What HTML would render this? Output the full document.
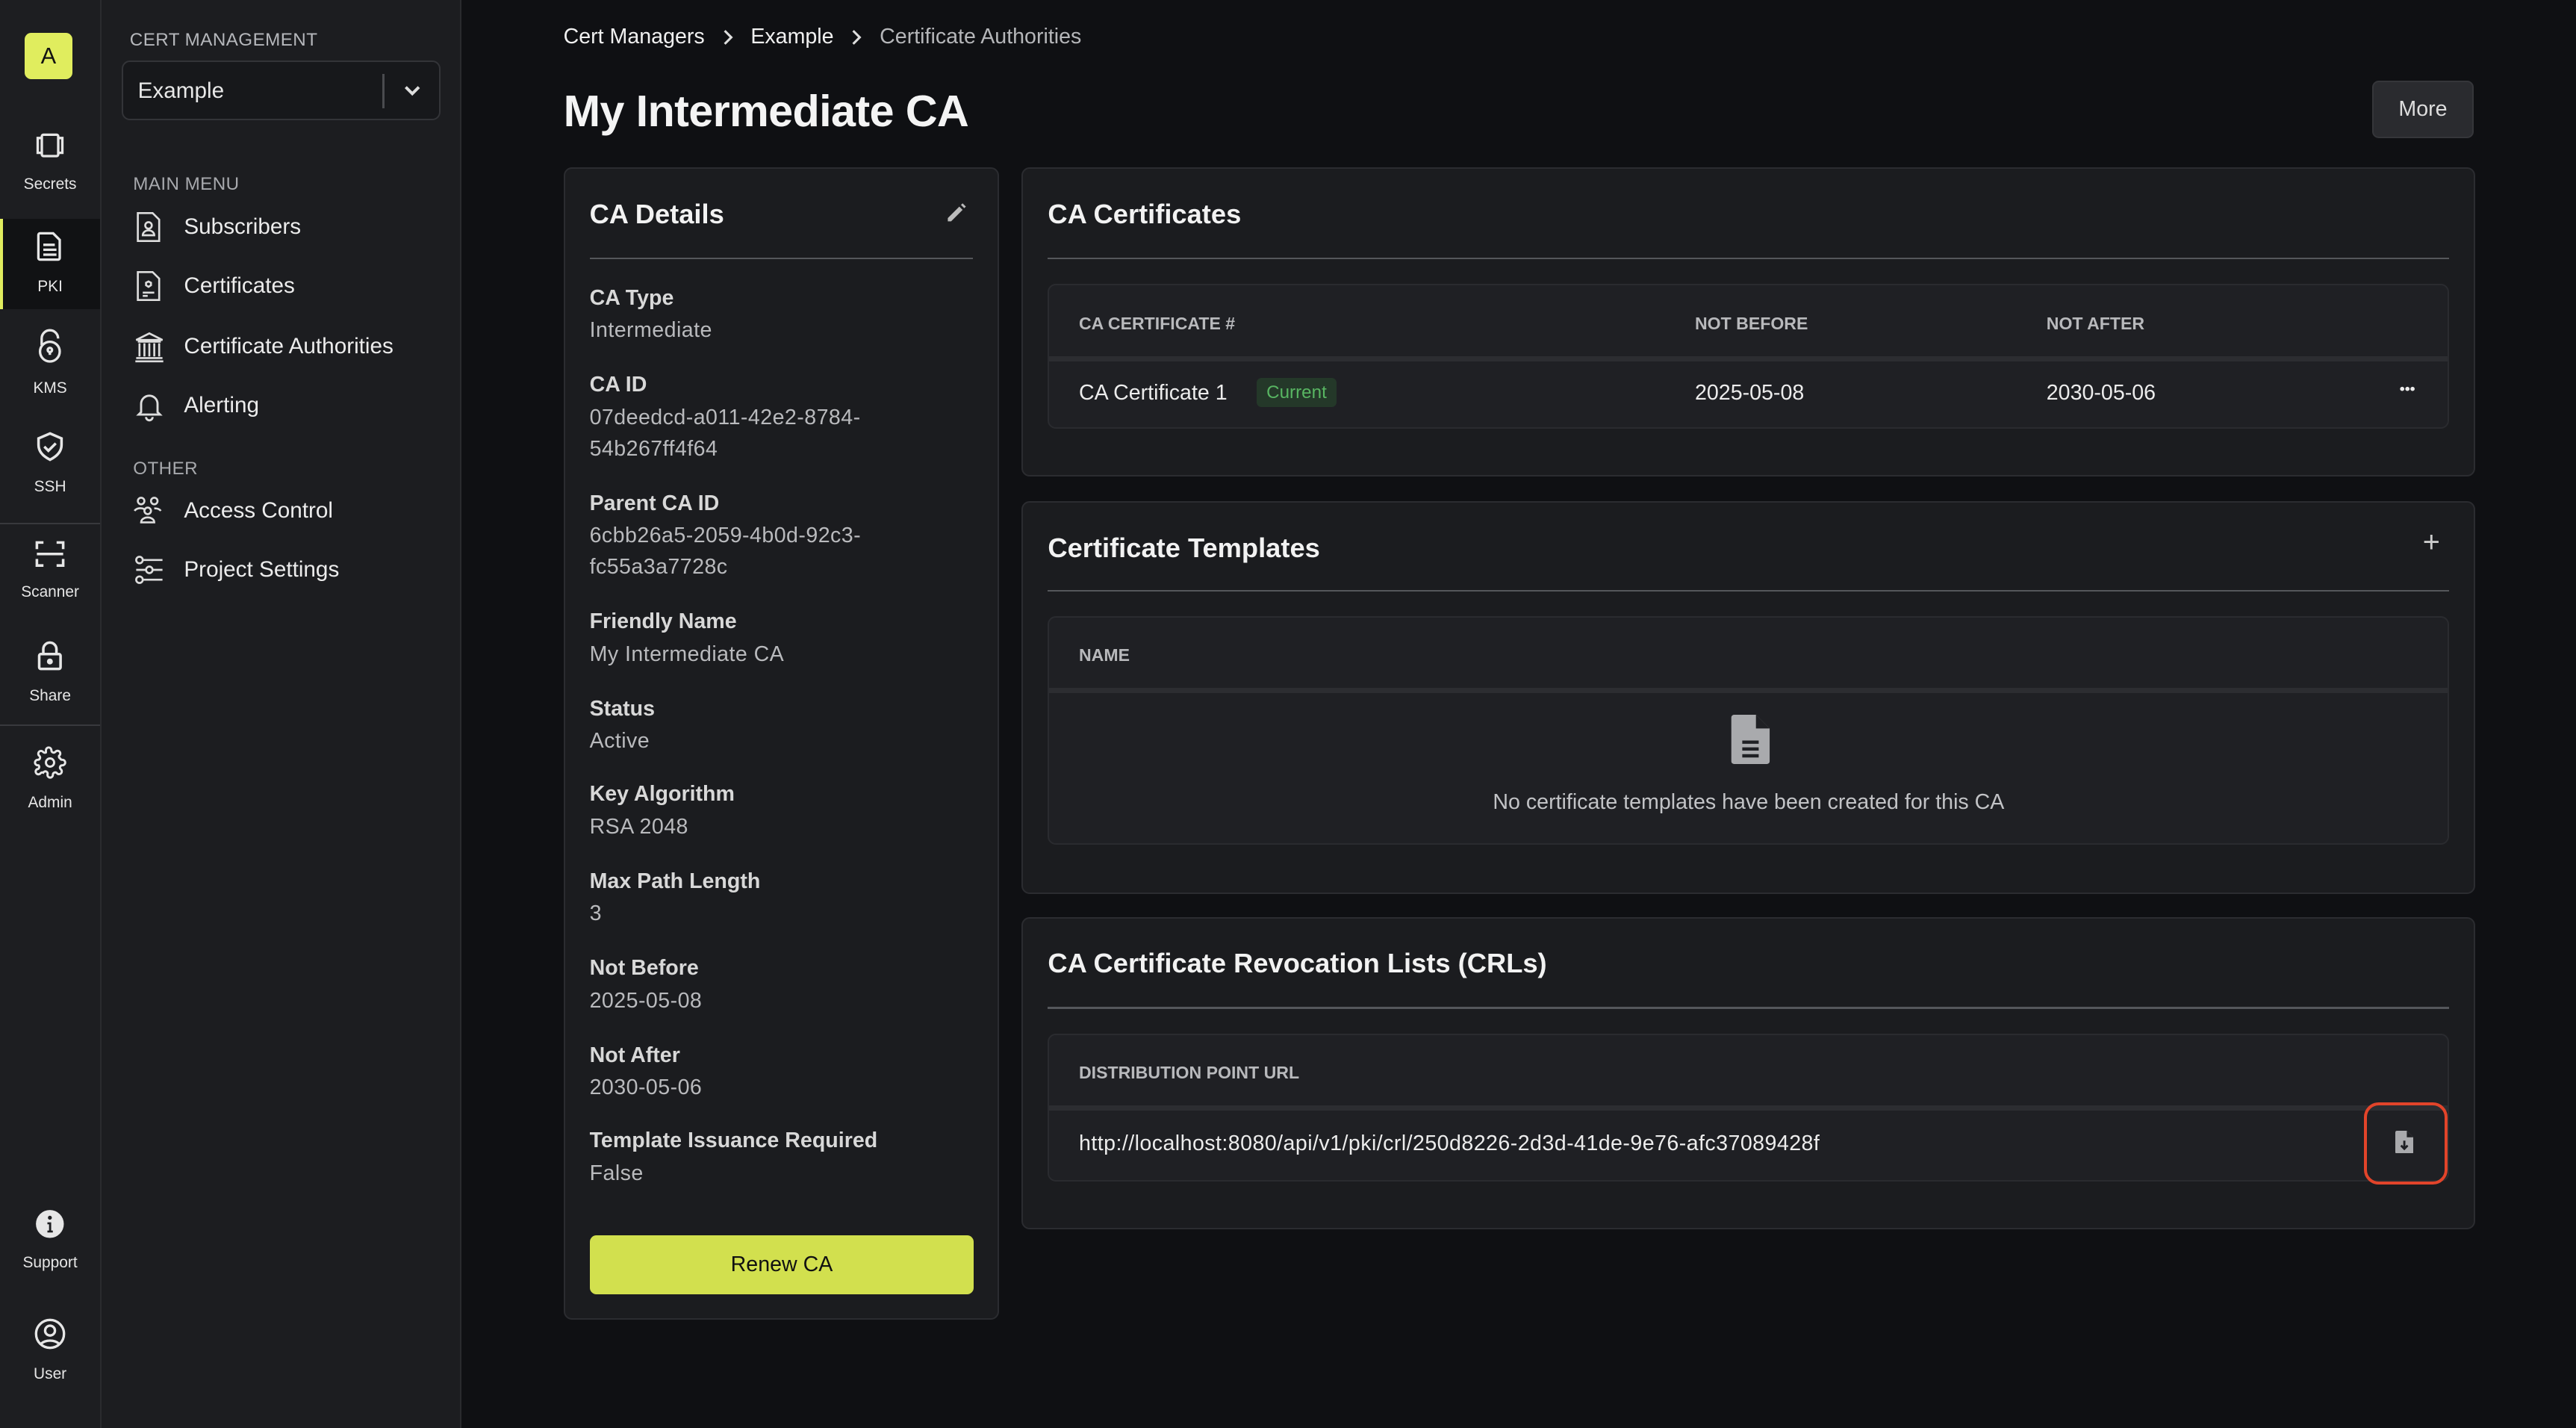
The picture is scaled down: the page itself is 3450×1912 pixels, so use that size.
<!DOCTYPE html>
<html><head><meta charset="utf-8">
<style>
*{box-sizing:border-box;margin:0;padding:0}
html,body{width:3450px;height:1912px;overflow:hidden;background:#0f1013}
#w{zoom:2.2;width:1569px;height:870px;position:relative;font-family:"Liberation Sans",sans-serif;color:#e8e8e8;background:#0f1013}
.a{position:absolute}
.rail{left:0;top:0;width:62px;height:869px;background:#1d1e21;border-right:1px solid #2a2b2e}
.ri{position:absolute;left:0;width:61px;text-align:center;font-size:9.5px;color:#e6e6e6}
.ri svg{display:block;margin:0 auto 9px}
.side{left:62px;top:0;width:219px;height:869px;background:#1c1d20;border-right:1px solid #2a2b2e}
.sec{position:absolute;left:19px;font-size:11px;color:#a7a9ad;letter-spacing:.2px}
.mi{position:absolute;left:19px;font-size:13.5px;color:#ececec;display:flex;align-items:center}
.mi svg{width:20px;height:20px;margin-right:11px}
.card{position:absolute;background:#1b1c1f;border:1px solid #2b2c30;border-radius:5px}
.ct{position:absolute;left:15px;font-size:16.5px;font-weight:bold;color:#f2f2f2}
.ln{position:absolute;left:15px;right:15px;height:1px;background:#55575b}
.tb{position:absolute;left:15px;right:15px;background:#1f2024;border:1px solid #2a2b2f;border-radius:5px;overflow:hidden}
.th{position:absolute;font-size:10.5px;font-weight:bold;color:#b8b9bc}
.td{position:absolute;font-size:13px;color:#ececec}
.hl{position:absolute;left:0;right:0;height:3px;background:#2c2d31}
.fl{position:absolute;left:15px;font-size:13px}
.fl b{display:block;color:#d8d8d8;font-weight:bold;margin-bottom:3px}
.fl span{color:#b9babd;line-height:19px;letter-spacing:.2px}
</style></head><body><div id="w">
<div class="a rail">
 <div class="a" style="left:15px;top:20px;width:29px;height:28px;background:#e0ed5e;border-radius:4px;color:#111;font-size:14px;text-align:center;line-height:28px">A</div>
 <div class="ri" style="top:80px"><svg width="20" height="18" viewBox="0 0 20 18" fill="none" stroke="#e6e6e6" stroke-width="1.5"><rect x="5" y="2" width="10" height="13" rx="1"/><path d="M5 4H2.5v9H5M15 4h2.5v9H15"/></svg>Secrets</div>
 <div class="a" style="left:0;top:133px;width:61px;height:55px;background:#111214;border-left:2px solid #e0ed5e"></div>
 <div class="ri" style="top:140px"><svg width="18" height="20" viewBox="0 0 18 20" fill="none" stroke="#e6e6e6" stroke-width="1.5"><path d="M3 2h8l4 4v11a1 1 0 0 1-1 1H3a1 1 0 0 1-1-1V3a1 1 0 0 1 1-1z"/><path d="M5 9h7M5 12h8M5 15h8"/></svg>PKI</div>
 <div class="ri" style="top:200px"><svg width="18" height="22" viewBox="0 0 18 22" fill="none" stroke="#e6e6e6" stroke-width="1.5"><path d="M4 10V6a5 5 0 0 1 10 0"/><circle cx="9" cy="14" r="6"/><circle cx="9" cy="13" r="1.3"/><path d="M9 14v2"/></svg>KMS</div>
 <div class="ri" style="top:262px"><svg width="20" height="20" viewBox="0 0 20 20" fill="none" stroke="#e6e6e6" stroke-width="1.6"><path d="M10 2l7 3v4c0 4-3 7-7 9-4-2-7-5-7-9V5z"/><path d="M6.5 10l2.5 2.5 4.5-4.5"/></svg>SSH</div>
 <div class="a" style="left:0;top:318px;width:61px;height:1px;background:#38393d"></div>
 <div class="ri" style="top:328px"><svg width="20" height="18" viewBox="0 0 20 18" fill="none" stroke="#e6e6e6" stroke-width="1.6"><path d="M2 6V2h4M14 2h4v4M18 12v4h-4M6 16H2v-4M2 9h16"/></svg>Scanner</div>
 <div class="ri" style="top:389px"><svg width="18" height="20" viewBox="0 0 18 20" fill="none" stroke="#e6e6e6" stroke-width="1.6"><path d="M5 9V6a4 4 0 0 1 8 0v3"/><rect x="2.5" y="9" width="13" height="9" rx="1"/><circle cx="9" cy="13.5" r="1" fill="#e6e6e6"/></svg>Share</div>
 <div class="a" style="left:0;top:441px;width:61px;height:1px;background:#38393d"></div>
 <div class="ri" style="top:454px"><svg width="20" height="20" viewBox="0 0 24 24" fill="none" stroke="#e6e6e6" stroke-width="1.6"><circle cx="12" cy="12" r="3"/><path d="M19.4 15a1.7 1.7 0 0 0 .3 1.8l.1.1a2 2 0 1 1-2.8 2.8l-.1-.1a1.7 1.7 0 0 0-2.8 1.2V21a2 2 0 1 1-4 0v-.1A1.7 1.7 0 0 0 7 19.4a1.7 1.7 0 0 0-1.8.3l-.1.1a2 2 0 1 1-2.8-2.8l.1-.1A1.7 1.7 0 0 0 3.6 14H3a2 2 0 1 1 0-4h.1A1.7 1.7 0 0 0 4.6 9a1.7 1.7 0 0 0-.3-1.8l-.1-.1a2 2 0 1 1 2.8-2.8l.1.1A1.7 1.7 0 0 0 9 4.6V3a2 2 0 1 1 4 0v.1a1.7 1.7 0 0 0 1 1.5 1.7 1.7 0 0 0 1.8-.3l.1-.1a2 2 0 1 1 2.8 2.8l-.1.1A1.7 1.7 0 0 0 19.4 9 1.7 1.7 0 0 0 21 10h.1a2 2 0 1 1 0 4H21a1.7 1.7 0 0 0-1.6 1z"/></svg>Admin</div>
 <div class="ri" style="top:736px"><svg width="18" height="18" viewBox="0 0 18 18"><circle cx="9" cy="9" r="8.5" fill="#e6e6e6"/><circle cx="9" cy="5.2" r="1.2" fill="#1d1e21"/><path d="M7.5 8h2.3v5h1v1.2H7.5V13h1V9.2h-1z" fill="#1d1e21"/></svg>Support</div>
 <div class="ri" style="top:802px"><svg width="20" height="20" viewBox="0 0 20 20" fill="none" stroke="#e6e6e6" stroke-width="1.5"><circle cx="10" cy="10" r="8.5"/><circle cx="10" cy="8" r="3"/><path d="M4.5 16a7 5 0 0 1 11 0"/></svg>User</div>
</div>
<div class="a side">
 <div class="sec" style="top:18px;left:17px;color:#b5b7bb">CERT MANAGEMENT</div>
 <div class="a" style="left:12px;top:37px;width:194px;height:36px;border:1px solid #333438;border-radius:5px;background:#17181b">
  <div class="a" style="left:9px;top:10px;font-size:13.5px;color:#e8e8e8">Example</div>
  <div class="a" style="left:158px;top:7px;width:1px;height:21px;background:#4a4b4f"></div>
  <svg class="a" style="left:170px;top:12px" width="12" height="10" viewBox="0 0 12 10" fill="none" stroke="#ddd" stroke-width="1.8"><path d="M2 3l4 4 4-4"/></svg>
 </div>
 <div class="sec" style="top:106px">MAIN MENU</div>
 <div class="mi" style="top:128px"><svg viewBox="0 0 20 20" fill="none" stroke="#ddd" stroke-width="1.2"><path d="M3 1.5h9l4 4v13H3z"/><circle cx="9.5" cy="9" r="2"/><path d="M6 15a3.5 3 0 0 1 7 0z"/></svg>Subscribers</div>
 <div class="mi" style="top:164px"><svg viewBox="0 0 20 20" fill="none" stroke="#ddd" stroke-width="1.2"><path d="M3 1.5h9l4 4v13H3z"/><path d="M8 8l1.5-.8 1.5.8v1.5l-1.5 1-1.5-1zM6 14h7M6 16h3"/></svg>Certificates</div>
 <div class="mi" style="top:201px"><svg viewBox="0 0 20 20" fill="none" stroke="#ddd" stroke-width="1.2"><path d="M2 6l8-4 8 4zM3 7h14M4 8v8M7 8v8M10 8v8M13 8v8M16 8v8M2 17h16M1.5 19h17"/></svg>Certificate Authorities</div>
 <div class="mi" style="top:237px"><svg viewBox="0 0 20 20" fill="none" stroke="#ddd" stroke-width="1.3"><path d="M5 14V9a5 5 0 0 1 10 0v5l1.5 1.5h-13zM8 17a2 2 0 0 0 4 0"/></svg>Alerting</div>
 <div class="sec" style="top:279px">OTHER</div>
 <div class="mi" style="top:301px"><svg viewBox="0 0 20 20" fill="none" stroke="#ddd" stroke-width="1.2"><circle cx="5" cy="4" r="2"/><circle cx="13" cy="4" r="2"/><circle cx="9" cy="10" r="2"/><path d="M1 10a4 3 0 0 1 6-1M17 10a4 3 0 0 0-4-1.5M5 17a4 3 0 0 1 8 0z"/></svg>Access Control</div>
 <div class="mi" style="top:337px"><svg viewBox="0 0 20 20" fill="none" stroke="#ddd" stroke-width="1.2"><path d="M6 4h12M2 10h6M12 10h6M6 16h12"/><circle cx="4" cy="4" r="2"/><circle cx="10" cy="10" r="2"/><circle cx="4" cy="16" r="2"/></svg>Project Settings</div>
</div>

<div class="a" style="left:343px;top:15px;font-size:13px;color:#f0f0f0;display:flex;align-items:center"><span>Cert Managers</span><svg width="10" height="10" viewBox="0 0 10 10" style="margin:0 9px" fill="none" stroke="#ddd" stroke-width="1.4"><path d="M3 1l4 4-4 4"/></svg><span>Example</span><svg width="10" height="10" viewBox="0 0 10 10" style="margin:0 9px" fill="none" stroke="#ddd" stroke-width="1.4"><path d="M3 1l4 4-4 4"/></svg><span style="color:#b5b6b9">Certificate Authorities</span></div>
<div class="a" style="left:343px;top:52px;font-size:27px;font-weight:bold;color:#f4f4f4;letter-spacing:-.3px">My Intermediate CA</div>
<div class="a" style="left:1444px;top:49px;width:62px;height:35px;background:#2a2b2f;border:1px solid #35363a;border-radius:4px;font-size:13px;text-align:center;line-height:33px;color:#ddd">More</div>

<div class="card" style="left:343px;top:102px;width:265px;height:701px">
 <div class="ct" style="top:18px">CA Details</div>
 <svg class="a" style="left:231px;top:20px" width="14" height="14" viewBox="0 0 14 14" fill="#bbb"><path d="M2 10l7-7 2 2-7 7H2zM10 2l1-1 2 2-1 1z"/></svg>
 <div class="ln" style="top:54px"></div>
 <div class="fl" style="top:71px"><b>CA Type</b><span>Intermediate</span></div>
 <div class="fl" style="top:124px"><b>CA ID</b><span>07deedcd-a011-42e2-8784-<br>54b267ff4f64</span></div>
 <div class="fl" style="top:196px"><b>Parent CA ID</b><span>6cbb26a5-2059-4b0d-92c3-<br>fc55a3a7728c</span></div>
 <div class="fl" style="top:268px"><b>Friendly Name</b><span>My Intermediate CA</span></div>
 <div class="fl" style="top:321px"><b>Status</b><span>Active</span></div>
 <div class="fl" style="top:373px"><b>Key Algorithm</b><span>RSA 2048</span></div>
 <div class="fl" style="top:426px"><b>Max Path Length</b><span>3</span></div>
 <div class="fl" style="top:479px"><b>Not Before</b><span>2025-05-08</span></div>
 <div class="fl" style="top:532px"><b>Not After</b><span>2030-05-06</span></div>
 <div class="fl" style="top:584px"><b>Template Issuance Required</b><span>False</span></div>
 <div class="a" style="left:15px;top:649px;width:234px;height:36px;background:#d2e04e;border-radius:4px;color:#111;font-size:13px;text-align:center;line-height:36px">Renew CA</div>
</div>

<div class="card" style="left:622px;top:102px;width:885px;height:188px">
 <div class="ct" style="top:18px">CA Certificates</div>
 <div class="ln" style="top:54px"></div>
 <div class="tb" style="top:70px;height:88px">
  <div class="th" style="left:18px;top:17px">CA CERTIFICATE #</div>
  <div class="th" style="left:393px;top:17px">NOT BEFORE</div>
  <div class="th" style="left:607px;top:17px">NOT AFTER</div>
  <div class="hl" style="top:43px"></div>
  <div class="td" style="left:18px;top:58px">CA Certificate 1</div>
  <div class="a" style="left:126px;top:56px;width:49px;height:18px;background:#243829;border-radius:3px;font-size:11px;color:#58b562;text-align:center;line-height:18px">Current</div>
  <div class="td" style="left:393px;top:58px">2025-05-08</div>
  <div class="td" style="left:607px;top:58px">2030-05-06</div>
  <div class="td" style="left:822px;top:58px;font-weight:bold;font-size:9px">•••</div>
 </div>
</div>

<div class="card" style="left:622px;top:305px;width:885px;height:239px">
 <div class="ct" style="top:18px">Certificate Templates</div>
 <div class="a" style="left:852px;top:14px;font-size:18px;color:#ccc">+</div>
 <div class="ln" style="top:53px"></div>
 <div class="tb" style="top:69px;height:139px">
  <div class="th" style="left:18px;top:17px">NAME</div>
  <div class="hl" style="top:43px"></div>
  <svg class="a" style="left:415px;top:59px" width="24" height="30" viewBox="0 0 14 18"><path d="M1 0h8l5 5v12a1 1 0 0 1-1 1H1a1 1 0 0 1-1-1V1a1 1 0 0 1 1-1z" fill="#a9aaad"/><path d="M9 0v5h5" fill="#1f2024"/><path d="M4 10h6M4 12.5h6M4 15h6" stroke="#1f2024" stroke-width="1.2"/></svg>
  <div class="a" style="left:0;right:0;top:105px;text-align:center;font-size:13px;color:#c2c3c6">No certificate templates have been created for this CA</div>
 </div>
</div>

<div class="card" style="left:622px;top:558px;width:885px;height:190px">
 <div class="ct" style="top:18px">CA Certificate Revocation Lists (CRLs)</div>
 <div class="ln" style="top:54px"></div>
 <div class="tb" style="top:70px;height:90px">
  <div class="th" style="left:18px;top:17px">DISTRIBUTION POINT URL</div>
  <div class="hl" style="top:43px"></div>
  <div class="td" style="left:18px;top:59px;letter-spacing:.2px">http://localhost:8080/api/v1/pki/crl/250d8226-2d3d-41de-9e76-afc37089428f</div>
 </div>
</div>
<div class="a" style="left:1439px;top:671px;width:51px;height:50px;border:2px solid #e2442a;border-radius:9px"></div>
<svg class="a" style="left:1458px;top:688px" width="11" height="14" viewBox="0 0 11 14"><path d="M1 0h6l4 4v9a1 1 0 0 1-1 1H1a1 1 0 0 1-1-1V1a1 1 0 0 1 1-1z" fill="#a9aaad"/><path d="M7 0v4h4" fill="#1f2024"/><path d="M5.5 6v5M3.5 9l2 2 2-2" stroke="#1f2024" stroke-width="1.3" fill="none"/></svg>
</div></body></html>
